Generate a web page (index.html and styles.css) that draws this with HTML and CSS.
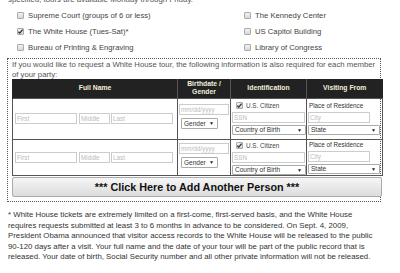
FILE: index.html
```html
<!DOCTYPE html>
<html>
<head>
<meta charset="utf-8">
<link rel="stylesheet" href="styles.css">
</head>
<body>
<p class="lead">specified, tours are available Monday through Friday.</p>
<div class="sites">
  <label class="site"><span class="cb"></span>Supreme Court (groups of 6 or less)</label>
  <label class="site"><span class="cb"></span>The Kennedy Center</label>
  <label class="site"><span class="cb checked"><svg viewBox="0 0 8 8"><path d="M1.6 4.2 L3.2 5.8 L6.4 1.8" /></svg></span>The White House (Tues-Sat)*</label>
  <label class="site"><span class="cb"></span>US Capitol Building</label>
  <label class="site"><span class="cb"></span>Bureau of Printing &amp; Engraving</label>
  <label class="site"><span class="cb"></span>Library of Congress</label>
</div>
<div class="party">
  <p class="note">If you would like to request a White House tour, the following information is also required for each member of your party:</p>
  <table class="people">
    <colgroup><col class="c1"><col class="c2"><col class="c3"><col class="c4"></colgroup>
    <thead>
      <tr><th>Full Name</th><th>Birthdate /<br>Gender</th><th>Identification</th><th>Visiting From</th></tr>
    </thead>
    <tbody>
      <tr class="r1">
        <td class="name"><div class="names"><span class="in first">First</span><span class="in mid">Middle</span><span class="in last">Last</span></div></td>
        <td class="bd"><span class="in date">mm/dd/yyyy</span><span class="sel gender">Gender<i>▼</i></span></td>
        <td class="id"><div class="cit"><span class="cb checked"><svg viewBox="0 0 8 8"><path d="M1.6 4.2 L3.2 5.8 L6.4 1.8" /></svg></span>U.S. Citizen</div><span class="in ssn">SSN</span><span class="sel cob">Country of Birth<i>▼</i></span></td>
        <td class="vf"><div class="por">Place of Residence</div><span class="in city">City</span><span class="sel state">State<i>▼</i></span></td>
      </tr>
      <tr class="r2">
        <td class="name"><div class="names"><span class="in first">First</span><span class="in mid">Middle</span><span class="in last">Last</span></div></td>
        <td class="bd"><span class="in date">mm/dd/yyyy</span><span class="sel gender">Gender<i>▼</i></span></td>
        <td class="id"><div class="cit"><span class="cb checked"><svg viewBox="0 0 8 8"><path d="M1.6 4.2 L3.2 5.8 L6.4 1.8" /></svg></span>U.S. Citizen</div><span class="in ssn">SSN</span><span class="sel cob">Country of Birth<i>▼</i></span></td>
        <td class="vf"><div class="por">Place of Residence</div><span class="in city">City</span><span class="sel state">State<i>▼</i></span></td>
      </tr>
    </tbody>
  </table>
  <button class="add">*** Click Here to Add Another Person ***</button>
</div>
<p class="foot">* White House tickets are extremely limited on a first-come, first-served basis, and the White House requires requests submitted at least 3 to 6 months in advance to be considered. On Sept. 4, 2009, President Obama announced that visitor access records to the White House will be released to the public 90-120 days after a visit. Your full name and the date of your tour will be part of the public record that is released. Your date of birth, Social Security number and all other private information will not be released.</p>
</body>
</html>
```
FILE: styles.css
```css
* { box-sizing: border-box; }
html, body { margin: 0; padding: 0; background: #fff; }
body {
  font-family: "Liberation Sans", Arial, sans-serif;
  font-size: 7.7px;
  color: #444;
  width: 400px;
  overflow: hidden;
}
.lead {
  margin: -5px 0 0 8px;
  line-height: 10px;
  height: 6px;
  font-size: 7.9px;
  color: #555;
}
.sites {
  display: grid;
  grid-template-columns: 227px 140px;
  grid-auto-rows: 16px;
  margin: 6px 0 0 17px;
  color: #444;
  font-size: 7.7px;
}
.site {
  display: flex;
  align-items: center;
  gap: 4px;
  height: 16px;
}
.cb {
  display: inline-block;
  width: 7px;
  height: 7px;
  border: 1px solid #aaa;
  border-radius: 1px;
  background: linear-gradient(#f2f2f2, #d8d8d8);
  flex: none;
  position: relative;
}
.cb svg {
  position: absolute;
  left: -1px;
  top: -1px;
  width: 7px;
  height: 7px;
}
.cb svg path {
  fill: none;
  stroke: #333;
  stroke-width: 1.5;
}
.party {
  margin: 3px 0 0 7px;
  width: 374px;
  height: 144px;
  border: 1px dotted #555;
  padding: 0 0 0 4px;
}
.note {
  margin: 0;
  padding: 1px 0 0 0;
  line-height: 9.5px;
  color: #555;
  font-size: 7.75px;
  height: 20px;
}
.people {
  border-collapse: collapse;
  table-layout: fixed;
  width: 370px;
}
.c1 { width: 165px; }
.c2 { width: 53px; }
.c3 { width: 76px; }
.c4 { width: 76px; }
.people th {
  background: #222;
  color: #f2f0dc;
  font-weight: bold;
  font-size: 6.8px;
  line-height: 8.5px;
  height: 19px;
  padding: 0;
  border-left: 1px solid #555;
  text-align: center;
}
.people th:first-child { border-left: 1px solid #222; }
.people td {
  border: 1px solid #555;
  padding: 0 1px;
  vertical-align: top;
}
.r1 td { height: 41px; padding-top: 2px; }
.r2 td { height: 36px; padding-top: 0; }
.people td.name { vertical-align: middle; padding: 0 2px; }
.names { display: flex; gap: 2px; }
.in {
  display: block;
  height: 11px;
  border: 1px solid #ccc;
  color: #bbb;
  font-size: 6.3px;
  line-height: 9px;
  padding: 0 1px;
  background: #fff;
  white-space: nowrap;
  overflow: hidden;
}
.first { width: 62px; }
.mid { width: 31px; margin-right: -1px; }
.last { width: 62px; }
.sel {
  display: flex;
  justify-content: space-between;
  align-items: center;
  height: 10px;
  border: 1px solid #aaa;
  border-radius: 1px;
  color: #333;
  font-size: 6.5px;
  padding: 0 3px 0 2px;
  background: #fff;
  white-space: nowrap;
}
.sel i { font-style: normal; font-size: 5px; color: #222; }
.date { width: 50px; margin-top: 3px; }
.gender { width: 37px; margin: 3px 0 0 2px; height: 11px; }
.cit { display: flex; align-items: center; gap: 3px; height: 9px; padding-left: 4px; color: #444; font-size: 6.3px; }
.ssn { width: 73px; margin-top: 2px; }
.cob { width: 74px; margin-top: 2px; }
.r2 .cit { margin-top: 1px; }
.por { height: 9px; line-height: 9px; color: #333; font-size: 6.3px; padding-left: 1px; }
.city { width: 62px; margin-top: 2px; }
.state { width: 72px; margin-top: 2px; }
.add {
  display: block;
  width: 370px;
  height: 20px;
  margin: 1px 0 0 0;
  padding: 0;
  border: 1px solid #aaa;
  border-radius: 2px;
  background: linear-gradient(#f6f6f6, #dcdcdc);
  font-family: "Liberation Sans", Arial, sans-serif;
  font-weight: bold;
  font-size: 10.8px;
  color: #111;
  text-align: center;
}
.foot {
  margin: 8px 0 0 8px;
  width: 370px;
  line-height: 10.5px;
  font-size: 7.85px;
  color: #333;
}
```
